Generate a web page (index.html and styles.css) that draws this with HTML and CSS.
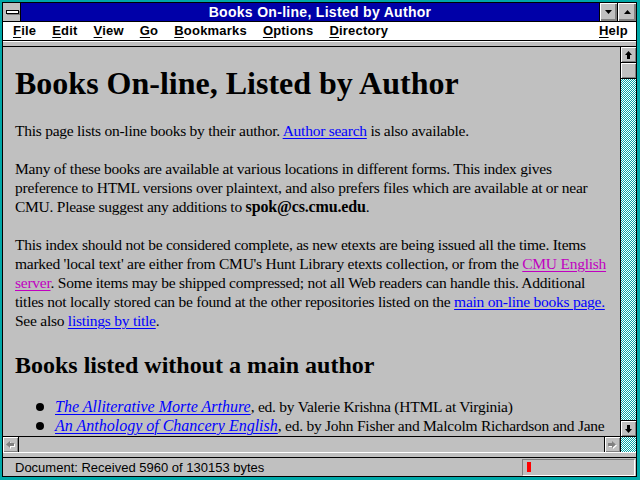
FILE: index.html
```html
<!DOCTYPE html>
<html>
<head>
<meta charset="utf-8">
<title>Books On-line, Listed by Author</title>
<link rel="stylesheet" href="styles.css">
</head>
<body>
<div class="win">
  <div class="frame">
    <div class="titlebar">
      <div class="sysbox"><span class="sysbar"></span></div>
      <div class="title">Books On-line, Listed by Author</div>
      <div class="tbtn tbtn-min"><svg width="7" height="4" viewBox="0 0 7 4"><polygon points="0,0 7,0 3.5,4" fill="#000"/></svg></div>
      <div class="tbtn tbtn-max"><svg width="7" height="4" viewBox="0 0 7 4"><polygon points="0,4 7,4 3.5,0" fill="#000"/></svg></div>
    </div>
    <div class="menubar">
      <span class="mi"><u>F</u>ile</span>
      <span class="mi"><u>E</u>dit</span>
      <span class="mi"><u>V</u>iew</span>
      <span class="mi"><u>G</u>o</span>
      <span class="mi"><u>B</u>ookmarks</span>
      <span class="mi"><u>O</u>ptions</span>
      <span class="mi"><u>D</u>irectory</span>
      <span class="mi help"><u>H</u>elp</span>
    </div>
    <div class="sep"></div>
    <div class="main">
      <div class="view">
        <h1>Books On-line, Listed by Author</h1>
        <p>This page lists on-line books by their author. <a href="#">Author search</a> is also available.</p>
        <p>Many of these books are available at various locations in different forms. This index gives<br>preference to HTML versions over plaintext, and also prefers files which are available at or near<br>CMU. Please suggest any additions to <b>spok@cs.cmu.edu</b>.</p>
        <p>This index should not be considered complete, as new etexts are being issued all the time. Items<br>marked 'local text' are either from CMU's Hunt Library etexts collection, or from the <a class="visited" href="#">CMU English<br>server</a>. Some items may be shipped compressed; not all Web readers can handle this. Additional<br>titles not locally stored can be found at the other repositories listed on the <a href="#">main on-line books page.</a><br>See also <a href="#">listings by title</a>.</p>
        <h2>Books listed without a main author</h2>
        <ul>
          <li><a href="#"><i>The Alliterative Morte Arthure</i></a>, ed. by Valerie Krishna (HTML at Virginia)</li>
          <li><a href="#"><i>An Anthology of Chancery English</i></a>, ed. by John Fisher and Malcolm Richardson and Jane</li>
        </ul>
      </div>
      <div class="vscroll">
        <div class="sbtn sbtn-up"><svg width="7" height="8" viewBox="0 0 7 8"><polygon points="3.5,0 7,4 5,4 5,8 2,8 2,4 0,4" fill="#000"/></svg></div>
        <div class="thumb"></div>
        <div class="track"></div>
        <div class="sbtn sbtn-down"><svg width="7" height="8" viewBox="0 0 7 8"><polygon points="3.5,8 7,4 5,4 5,0 2,0 2,4 0,4" fill="#000"/></svg></div>
      </div>
    </div>
    <div class="hscroll">
      <div class="sbtn sbtn-left"><svg width="9" height="8" viewBox="0 0 9 8"><polygon transform="translate(1,1)" points="0,3.5 4,0 4,2 8,2 8,5 4,5 4,7" fill="#fff"/><polygon points="0,3.5 4,0 4,2 8,2 8,5 4,5 4,7" fill="#808080"/></svg></div>
      <div class="htrack"></div>
      <div class="sbtn sbtn-right"><svg width="9" height="8" viewBox="0 0 9 8"><polygon transform="translate(1,1)" points="8,3.5 4,0 4,2 0,2 0,5 4,5 4,7" fill="#fff"/><polygon points="8,3.5 4,0 4,2 0,2 0,5 4,5 4,7" fill="#808080"/></svg></div>
      <div class="corner"></div>
    </div>
    <div class="sep"></div>
    <div class="status">
      <span class="stext">Document: Received 5960 of 130153 bytes</span>
      <div class="progress"><div class="pbar"></div></div>
    </div>
  </div>
</div>
</body>
</html>
```
FILE: styles.css
```css
html, body {
  margin: 0;
  padding: 0;
  background: #00a8a8;
}
.win {
  width: 640px;
  height: 480px;
  box-sizing: border-box;
  padding: 2px 3px 3px 2px;
  background: #00a8a8;
}
.frame {
  height: 100%;
  box-sizing: border-box;
  border: 1px solid #000;
  display: flex;
  flex-direction: column;
  background: #c0c0c0;
}
.titlebar {
  height: 18px;
  border-bottom: 1px solid #000;
  display: flex;
  flex: none;
}
.sysbox {
  width: 18px;
  border-right: 1px solid #000;
  background: #c0c0c0;
  box-sizing: border-box;
  padding: 7px 0 0 3px;
}
.sysbar {
  display: block;
  width: 11px;
  height: 2px;
  background: #fff;
  border: 1px solid #000;
  box-shadow: 1px 1px 0 #808080;
}
.title {
  flex: 1;
  background: #0000a8;
  color: #fff;
  font: bold 14px/18px "Liberation Sans", Arial, sans-serif;
  letter-spacing: 0.3px;
  text-align: center;
  padding-left: 20px;
}
.tbtn {
  border-left: 1px solid #000;
  background: #c0c0c0;
  box-shadow: inset 1px 1px 0 #fff, inset -1px -1px 0 #808080, inset -2px -2px 0 #808080;
  display: flex;
  align-items: center;
  justify-content: center;
}
.tbtn-min { width: 17px; }
.tbtn-max { width: 18px; }
.menubar {
  height: 18px;
  background: #fff;
  border-bottom: 1px solid #000;
  display: flex;
  gap: 16px;
  padding: 0 8px 0 10px;
  font: bold 13px/18px "Liberation Sans", Arial, sans-serif;
  letter-spacing: 0.2px;
  color: #000;
  flex: none;
}
.mi u { text-decoration-thickness: 1px; text-underline-offset: 2px; }
.help { margin-left: auto; }
.sep {
  height: 4px;
  border-top: 1px solid #fff;
  border-bottom: 1px solid #000;
  background: #c0c0c0;
  flex: none;
}
.main {
  flex: 1;
  display: flex;
  min-height: 0;
}
.view {
  flex: 1;
  overflow: hidden;
  background: #c0c0c0;
  padding: 0 5px 0 12px;
  font: 16px/19px "Liberation Serif", "Times New Roman", serif;
  color: #000;
  white-space: nowrap;
}
.view h1 {
  font: bold 32px/37px "Liberation Serif", "Times New Roman", serif;
  margin: 18px 0 0;
}
.view p {
  margin: 19px 0 0;
}
.view p, .view li {
  font-size: 15.5px;
  letter-spacing: -0.25px;
}
.view b {
  font-size: 16px;
  letter-spacing: -0.15px;
}
.view i {
  font-size: 16px;
  letter-spacing: 0;
}
.view h2 {
  font: bold 24px/28px "Liberation Serif", "Times New Roman", serif;
  margin: 21px 0 18px;
}
.view ul {
  margin: 0;
  padding-left: 40px;
  list-style: none;
}
.view li {
  position: relative;
}
.view li::before {
  content: "";
  position: absolute;
  left: -19px;
  top: 6px;
  width: 8px;
  height: 8px;
  border-radius: 50%;
  background: #000;
}
.view a {
  color: #0000ff;
  text-decoration: underline;
  text-decoration-thickness: 1px;
  text-underline-offset: 2px;
}
.view a.visited { color: #c000c0; }
.vscroll {
  width: 15px;
  border-left: 1px solid #000;
  display: flex;
  flex-direction: column;
}
.sbtn {
  background: #c0c0c0;
  box-shadow: inset 1px 1px 0 #fff, inset -1px -1px 0 #808080;
  display: flex;
  align-items: center;
  justify-content: center;
  flex: none;
}
.sbtn-up {
  height: 15px;
  border-bottom: 1px solid #000;
}
.thumb {
  height: 15px;
  border-bottom: 1px solid #000;
  background: #c0c0c0;
  box-shadow: inset 1px 1px 0 #fff, inset -1px -1px 0 #808080;
  flex: none;
}
.track, .corner {
  background-color: #fff;
  background-image: repeating-conic-gradient(#00a8a8 0% 25%, #ffffff 0% 50%);
  background-size: 2px 2px;
}
.track { flex: 1; }
.sbtn-down {
  height: 15px;
  border-top: 1px solid #000;
}
.hscroll {
  height: 15px;
  border-top: 1px solid #000;
  display: flex;
  flex: none;
}
.sbtn-left {
  width: 15px;
  border-right: 1px solid #000;
}
.htrack {
  flex: 1;
  background: #c0c0c0;
}
.sbtn-right {
  width: 15px;
  border-left: 1px solid #000;
}
.corner {
  width: 15px;
  border-left: 1px solid #000;
}
.status {
  flex: none;
  height: 18px;
  display: flex;
  justify-content: space-between;
  align-items: flex-start;
  padding: 0 1px 0 12px;
  font: 13px/18px "Liberation Sans", Arial, sans-serif;
  color: #000;
}
.stext { padding-top: 1px; }
.progress {
  margin-top: 1px;
  width: 107px;
  height: 13px;
  border-top: 1px solid #808080;
  border-left: 1px solid #808080;
  border-bottom: 1px solid #fff;
  border-right: 1px solid #fff;
  padding: 2px 0 0 4px;
}
.pbar {
  width: 4px;
  height: 10px;
  background: #ff0000;
}
```
